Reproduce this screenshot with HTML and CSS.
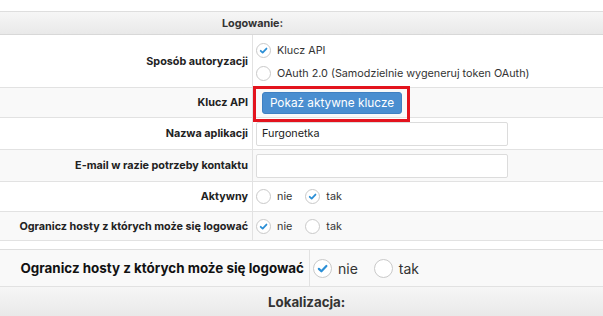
FILE: index.html
```html
<!DOCTYPE html>
<html lang="pl">
<head>
<meta charset="utf-8">
<link rel="stylesheet" href="styles.css">
</head>
<body>
<div class="page">
  <div class="top-space"></div>
  <div class="table">
    <div class="head head-small"><span>Logowanie:</span></div>
    <div class="row row-tall">
      <div class="label">Sposób autoryzacji</div>
      <div class="value stack">
        <label class="opt"><span class="radio on"><svg viewBox="0 0 14 14"><path d="M4 7.3 L6.1 9.3 L10.2 4.9"/></svg></span>Klucz API</label>
        <label class="opt"><span class="radio"></span>OAuth 2.0 (Samodzielnie wygeneruj token OAuth)</label>
      </div>
    </div>
    <div class="row row-key gray">
      <div class="label">Klucz API</div>
      <div class="value">
        <div class="btn-wrap"><button class="btn">Pokaż aktywne klucze</button></div>
      </div>
    </div>
    <div class="row row-input">
      <div class="label">Nazwa aplikacji</div>
      <div class="value"><div class="input">Furgonetka</div></div>
    </div>
    <div class="row row-input gray">
      <div class="label">E-mail w razie potrzeby kontaktu</div>
      <div class="value"><div class="input"></div></div>
    </div>
    <div class="row row-radio">
      <div class="label">Aktywny</div>
      <div class="value inline">
        <label class="opt"><span class="radio"></span>nie</label>
        <label class="opt"><span class="radio on"><svg viewBox="0 0 14 14"><path d="M4 7.3 L6.1 9.3 L10.2 4.9"/></svg></span>tak</label>
      </div>
    </div>
    <div class="row row-radio2 gray">
      <div class="label">Ogranicz hosty z których może się logować</div>
      <div class="value inline">
        <label class="opt"><span class="radio on"><svg viewBox="0 0 14 14"><path d="M4 7.3 L6.1 9.3 L10.2 4.9"/></svg></span>nie</label>
        <label class="opt"><span class="radio"></span>tak</label>
      </div>
    </div>
  </div>
  <div class="gap"></div>
  <div class="table big">
    <div class="row row-big">
      <div class="label">Ogranicz hosty z których może się logować</div>
      <div class="value inline">
        <label class="opt"><span class="radio on"><svg viewBox="0 0 14 14"><path d="M4 7.3 L6.1 9.3 L10.2 4.9"/></svg></span>nie</label>
        <label class="opt"><span class="radio"></span>tak</label>
      </div>
    </div>
    <div class="head head-big"><span>Lokalizacja:</span></div>
  </div>
</div>
</body>
</html>
```

FILE: styles.css
```css
* { box-sizing: border-box; }
html, body { margin: 0; padding: 0; background: #fff; }
body {
  font-family: Inter, "Noto Sans", "Liberation Sans", sans-serif;
  color: #333;
  width: 603px;
  height: 316px;
  overflow: hidden;
}
.top-space { height: 11px; }
.table { border-top: 1px solid #dedede; }
.head {
  background: linear-gradient(#f6f6f6, #e9e9e9);
  border-bottom: 1px solid #d8d8d8;
  font-weight: 700;
  color: #333;
  display: flex;
  align-items: center;
}
.head-small { height: 23px; padding-left: 222px; font-size: 10.8px; }
.head-big { height: 30px; padding-left: 268px; font-size: 13.3px; }
.row {
  display: grid;
  grid-template-columns: 253px 1fr;
  border-bottom: 1px solid #e2e2e2;
  background: #fff;
}
.row.gray { background: #f9f9f9; }
.label {
  border-right: 1px solid #e2e2e2;
  text-align: right;
  padding-right: 4px;
  font-size: 10.8px;
  font-weight: 700;
  color: #222;
  display: flex;
  align-items: center;
  justify-content: flex-end;
}
.value {
  padding-left: 3px;
  display: flex;
  align-items: center;
  font-size: 10.8px;
  color: #333;
}
.row-tall { height: 53px; }
.row-key { height: 30px; }
.row-input { height: 32px; }
.row-radio { height: 30px; }
.row-radio2 { height: 29px; }
.stack { flex-direction: column; align-items: flex-start; justify-content: center; gap: 8px; padding-top: 1px; }
.inline { gap: 13px; }
.opt { display: flex; align-items: center; gap: 6px; }
.radio {
  width: 15px; height: 15px;
  border-radius: 50%;
  border: 1px solid #c9c9c9;
  background: #fff;
  display: inline-flex;
  flex: none;
}
.radio svg { width: 100%; height: 100%; }
.radio svg path { fill: none; stroke: #2b8fd6; stroke-width: 1.9; stroke-linecap: round; stroke-linejoin: round; }
.btn-wrap { position: relative; margin-left: 6px; margin-top: 1px; }
.btn-wrap::after {
  content: "";
  position: absolute;
  left: -9px; top: -6px; right: -8px; bottom: -8px;
  border: 3px solid #e3131d;
}
.btn {
  display: block;
  width: 140px; height: 22px;
  background: #4a8ed0;
  border: 1px solid #3f80c2;
  border-radius: 3px;
  color: #fff;
  font-family: inherit;
  font-size: 11.8px;
  font-weight: 400;
  padding: 0;
}
.input {
  width: 252px; height: 24px;
  border: 1px solid #dcdcdc;
  border-radius: 2px;
  background: #fff;
  padding-left: 5px;
  display: flex; align-items: center;
  font-size: 10.8px; color: #222;
}
.gap { height: 8px; }
.big .row { grid-template-columns: 310px 1fr; background: #f9f9f9; }
.row-big { height: 37px; }
.big .label { font-size: 13.4px; padding-right: 5px; color: #111; }
.big .value { font-size: 14px; padding-left: 3px; gap: 0; }
.big .opt { gap: 6px; margin-right: 16px; }
.big .radio { width: 19px; height: 19px; }
.big .radio svg path { stroke-width: 1.8; }
```
